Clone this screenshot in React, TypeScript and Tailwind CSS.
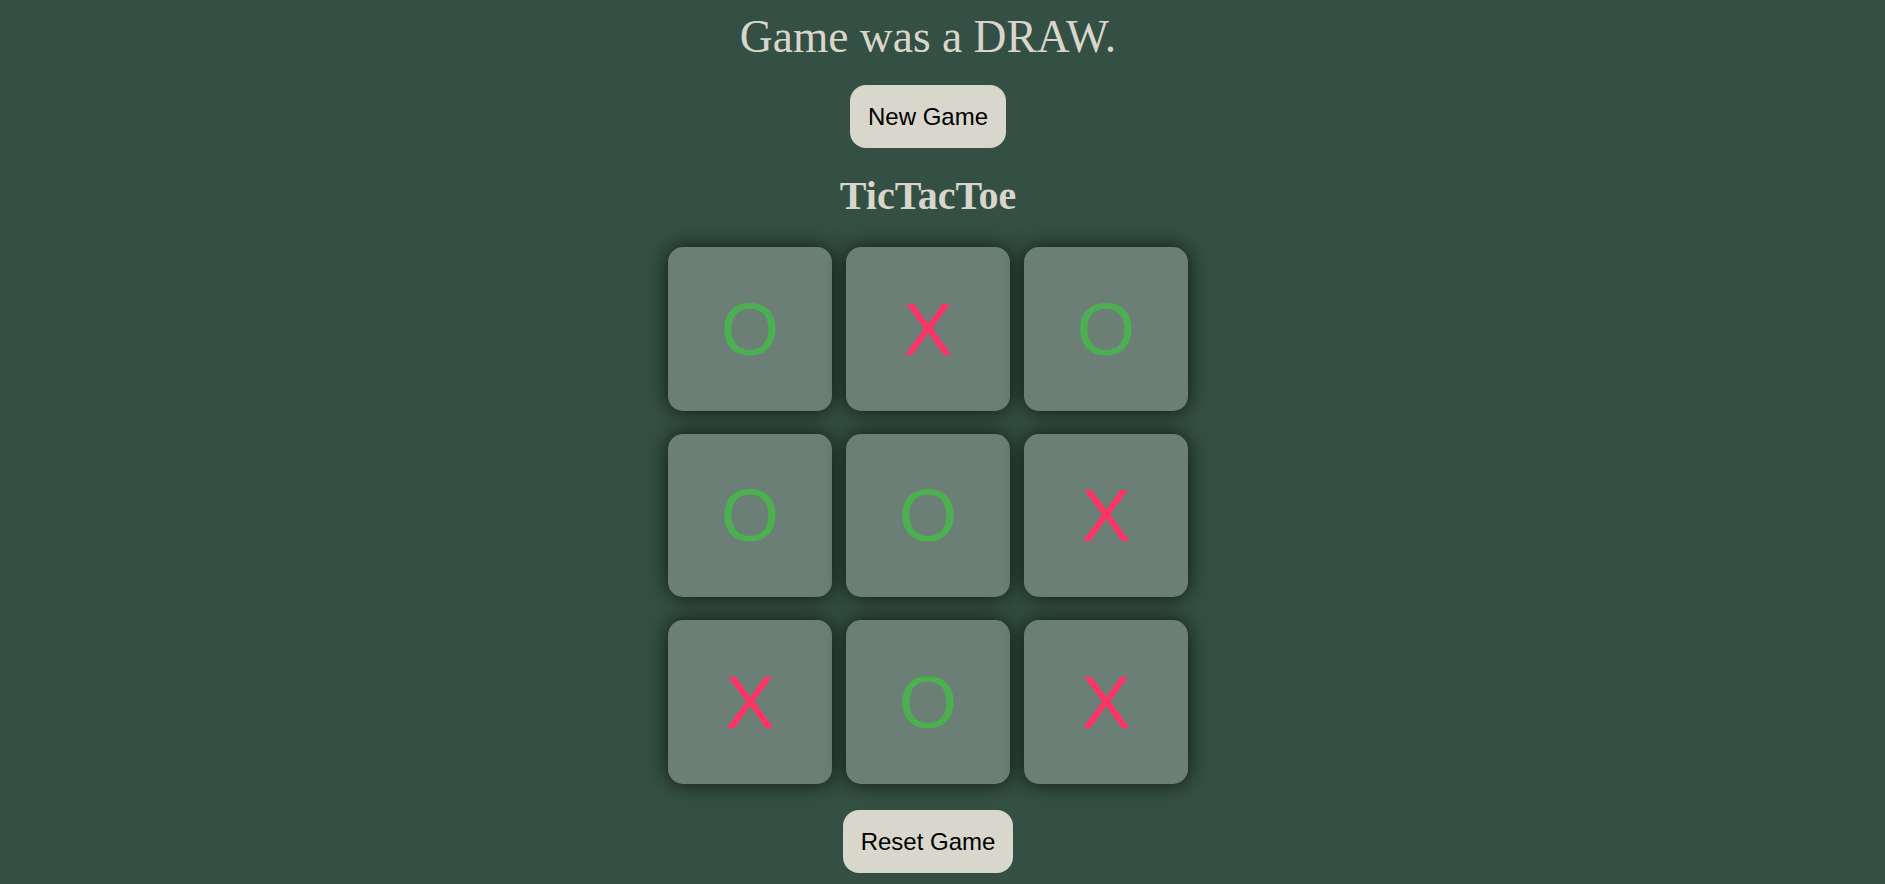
import { useState } from 'react';

type Cell = 'X' | 'O' | null;

const finalBoard: Cell[] = ['O', 'X', 'O', 'O', 'O', 'X', 'X', 'O', 'X'];

function Square({ value }: { value: Cell }) {
  return (
    <button
      className={
        'flex items-center justify-center w-[163.5px] h-[163.5px] rounded-[15px] bg-[#6b7f76] shadow-[0_0_20px_rgba(0,0,0,0.7)] text-[75px] font-["Liberation_Sans",Arial,sans-serif] ' +
        (value === 'X' ? 'text-[#ff3366]' : 'text-[#4caf50]')
      }
    >
      {value}
    </button>
  );
}

export default function App() {
  const [board, setBoard] = useState<Cell[]>(finalBoard);

  return (
    <div className="min-h-screen bg-[#344f43] flex flex-col items-center pr-[29px] font-['Liberation_Serif','Times_New_Roman',serif]">
      <h1 className="mt-[11.4px] text-[45.5px] leading-[52px] text-[#d8d6cb]">
        Game was a DRAW.
      </h1>

      <button
        onClick={() => setBoard(finalBoard)}
        className="mt-[21.6px] px-[18px] py-[18px] rounded-[16px] bg-[#d9d7cc] text-black text-[24px] leading-[27px] font-['Liberation_Sans',Arial,sans-serif]"
      >
        New Game
      </button>

      <h2 className="mt-[25.2px] text-[40px] leading-[46px] font-bold text-[#d8d6cb]">
        TicTacToe
      </h2>

      <div className="mt-[28.1px] grid grid-cols-3 gap-x-[14.5px] gap-y-[23px]">
        {board.map((value, i) => (
          <Square key={i} value={value} />
        ))}
      </div>

      <button
        onClick={() => setBoard(Array(9).fill(null))}
        className="mt-[26.7px] px-[18px] py-[18px] rounded-[16px] bg-[#d9d7cc] text-black text-[24px] leading-[27px] font-['Liberation_Sans',Arial,sans-serif]"
      >
        Reset Game
      </button>
    </div>
  );
}
